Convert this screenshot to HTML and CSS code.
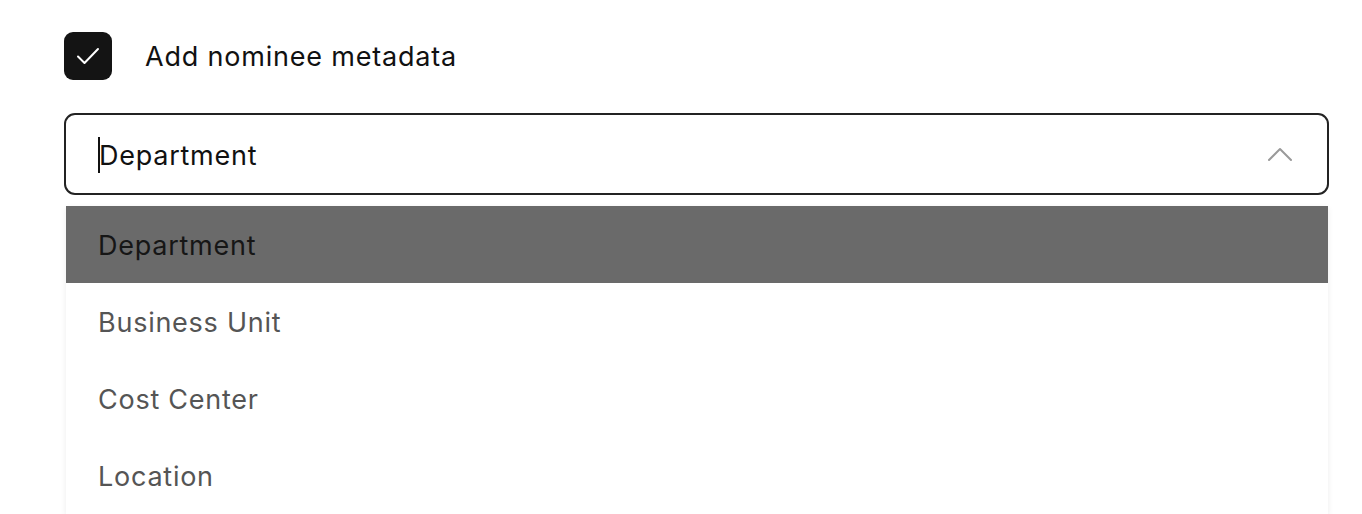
FILE: index.html
```html
<!DOCTYPE html>
<html lang="en">
<head>
  <meta charset="UTF-8" />
  <title>Nominee metadata</title>
  <link rel="stylesheet" href="styles.css">
</head>
<body>
  <div class="form">
    <label class="check">
      <span class="box">
        <svg width="24" height="18" viewBox="0 0 24 18" fill="none" stroke="#fff" stroke-width="2" stroke-linecap="round" stroke-linejoin="round"><path d="M2 9.5l6.5 6.5L22 2"/></svg>
      </span>
      <span class="check-label">Add nominee metadata</span>
    </label>

    <div class="select">
      <div class="select-input"><span class="caret"></span>Department</div>
      <svg class="chevron" width="26" height="16" viewBox="0 0 26 16" fill="none" stroke="#9a9a9a" stroke-width="2" stroke-linecap="round" stroke-linejoin="round"><path d="M2 14L13 3l11 11"/></svg>
    </div>

    <ul class="menu">
      <li class="active">Department</li>
      <li>Business Unit</li>
      <li>Cost Center</li>
      <li>Location</li>
    </ul>
  </div>
</body>
</html>
```

FILE: styles.css
```css
* {
  box-sizing: border-box;
}

body {
  margin: 0;
  font-family: Inter, "Noto Sans", sans-serif;
  background: #fff;
  color: #111;
}

.form {
  padding: 32px 33px 0 64px;
}

.check {
  display: flex;
  align-items: center;
  gap: 33px;
}

.box {
  width: 48px;
  height: 48px;
  border-radius: 9px;
  background: #141414;
  display: flex;
  align-items: center;
  justify-content: center;
}

.check-label {
  font-size: 27px;
  letter-spacing: 0.8px;
}

.select {
  margin-top: 33px;
  height: 82px;
  border: 2px solid #232323;
  border-radius: 11px;
  display: flex;
  align-items: center;
  justify-content: space-between;
  padding: 0 34px 0 32px;
}

.select-input {
  font-size: 27px;
  letter-spacing: 0.75px;
  display: flex;
  align-items: center;
  padding-top: 2px;
}

.caret {
  width: 2px;
  height: 36px;
  background: #111;
  margin-right: -1px;
}

.menu {
  list-style: none;
  margin: 11px 1px 0 2px;
  padding: 0;
  box-shadow: 0 2px 6px rgba(0, 0, 0, 0.08);
}

.menu li {
  height: 77px;
  display: flex;
  align-items: center;
  padding: 2px 0 0 32px;
  font-size: 27px;
  color: #555;
  letter-spacing: 0.75px;
}

.menu li.active {
  background: #6a6a6a;
  color: #161616;
}
```
